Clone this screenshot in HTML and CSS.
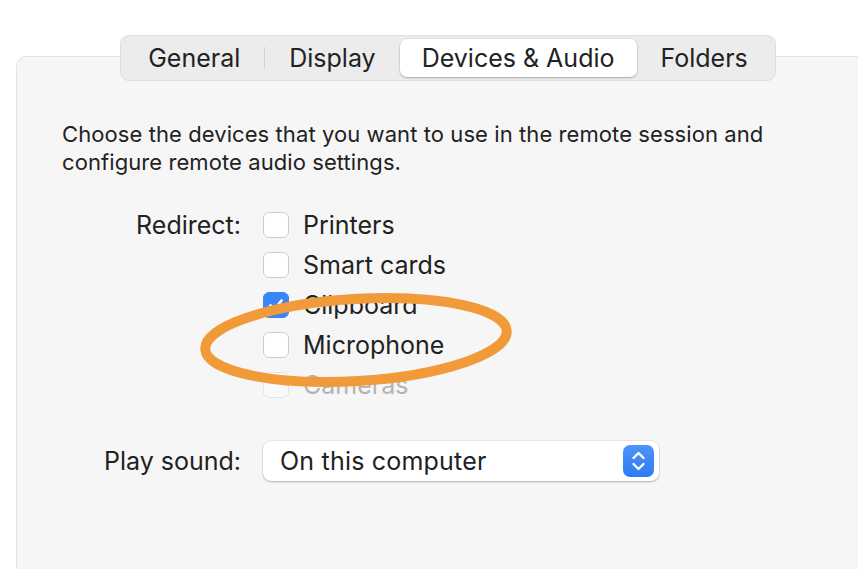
FILE: index.html
```html
<!DOCTYPE html>
<html lang="en">
<head>
    <meta charset="UTF-8">
    <title>Devices &amp; Audio</title>
    <link rel="stylesheet" href="styles.css">
</head>
<body>
    <div class="prefs-panel">
        <div class="tab-bar">
            <div class="tab">General</div>
            <div class="tab-sep"></div>
            <div class="tab">Display</div>
            <div class="tab tab-active">Devices &amp; Audio</div>
            <div class="tab">Folders</div>
        </div>

        <div class="panel-body">
            <p class="intro">Choose the devices that you want to use in the remote session and configure remote audio settings.</p>

            <div class="form-grid">
                <div class="form-label">Redirect:</div>
                <div class="check-list">
                    <label class="check-row"><span class="check-box"></span>Printers</label>
                    <label class="check-row"><span class="check-box"></span>Smart cards</label>
                    <label class="check-row">
                        <span class="check-box checked">
                            <svg viewBox="0 0 26 26" width="26" height="26"><path d="M7.5 13.5 L11.5 17.5 L18.5 8.5" fill="none" stroke="#fff" stroke-width="2.6" stroke-linecap="round" stroke-linejoin="round"/></svg>
                        </span>Clipboard
                    </label>
                    <label class="check-row"><span class="check-box"></span>Microphone</label>
                    <label class="check-row disabled"><span class="check-box"></span>Cameras</label>
                </div>

                <div class="form-label sound-label">Play sound:</div>
                <div class="popup">
                    <span>On this computer</span>
                    <span class="popup-arrows">
                        <svg viewBox="0 0 31 32" width="31" height="32">
                            <path d="M10.5 13 L15.5 8 L20.5 13" fill="none" stroke="#fff" stroke-width="2.4" stroke-linecap="round" stroke-linejoin="round"/>
                            <path d="M10.5 19 L15.5 24 L20.5 19" fill="none" stroke="#fff" stroke-width="2.4" stroke-linecap="round" stroke-linejoin="round"/>
                        </svg>
                    </span>
                </div>
            </div>
        </div>
    </div>

    <!-- hand-drawn highlight around the Microphone option -->
    <svg class="highlight" viewBox="0 0 340 115" width="340" height="115">
        <ellipse cx="166" cy="55" rx="151" ry="41" transform="rotate(-3.5 166 55)" fill="none" stroke="#f19a3a" stroke-width="10"/>
    </svg>
</body>
</html>
```

FILE: styles.css
```css
body {
    font-family: Inter, "Noto Sans", sans-serif;
    margin: 0;
    background: #fff;
    color: #222;
    width: 858px;
    height: 570px;
    overflow: hidden;
    position: relative;
}

.prefs-panel {
    margin: 56px 0 0 16px;
    width: 862px;
    height: 512px;
    background: #f6f6f6;
    border: 1px solid #e2e2e2;
    border-bottom: none;
    border-radius: 10px 10px 0 0;
}

.tab-bar {
    display: flex;
    align-items: center;
    width: fit-content;
    margin: -22px auto 0;
    padding: 3px;
    background: #ececec;
    border: 1px solid #dedede;
    border-radius: 9px;
}

.tab {
    font-size: 25px;
    line-height: 38px;
    padding: 0 24px;
    border-radius: 7px;
}

.tab-sep {
    width: 1px;
    height: 22px;
    background: #d2d2d2;
}

.tab-active {
    background: #fff;
    padding: 0 22px;
    box-shadow: 0 1px 2px rgba(0,0,0,0.25), 0 0 0 0.5px rgba(0,0,0,0.08);
}

.panel-body {
    padding: 39px 0 0 45px;
}

.intro {
    margin: 0;
    width: 770px;
    font-size: 22px;
    line-height: 28px;
    letter-spacing: 0.08px;
}

.form-grid {
    display: grid;
    grid-template-columns: 179px auto;
    column-gap: 22px;
    margin-top: 29px;
}

.form-label {
    text-align: right;
    font-size: 25px;
    line-height: 40px;
}

.check-list {
    display: flex;
    flex-direction: column;
}

.check-row {
    display: flex;
    align-items: center;
    gap: 14px;
    height: 40px;
    font-size: 25px;
}

.check-box {
    width: 26px;
    height: 26px;
    box-sizing: border-box;
    background: #fff;
    border: 1px solid #cbcbcb;
    border-radius: 6px;
}

.check-box.checked {
    background: #3a85f7;
    border-color: #3a85f7;
}

.check-box.checked svg {
    display: block;
    margin: -1px;
}

.check-row.disabled {
    color: #b4b4b4;
}

.check-row.disabled .check-box {
    border-color: #e4e4e4;
    background: #f9f9f9;
}

.sound-label {
    margin-top: 36px;
}

.popup {
    margin-top: 36px;
    width: 396px;
    height: 40px;
    box-sizing: border-box;
    display: flex;
    align-items: center;
    justify-content: space-between;
    padding: 0 5px 0 17px;
    background: #fff;
    border-radius: 8px;
    box-shadow: 0 1px 2px rgba(0,0,0,0.25), 0 0 0 0.5px rgba(0,0,0,0.1);
    font-size: 25px;
    letter-spacing: 0.2px;
}

.popup-arrows {
    width: 31px;
    height: 32px;
    border-radius: 7px;
    background: linear-gradient(#4c95f8, #2f7bf3);
}

.popup-arrows svg {
    display: block;
}

.highlight {
    position: absolute;
    left: 190px;
    top: 285px;
}
```
